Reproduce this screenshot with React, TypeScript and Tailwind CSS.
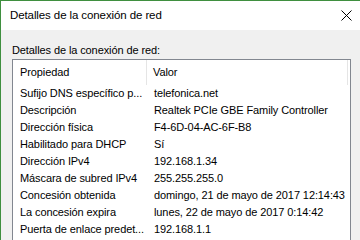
import React from 'react';

const rows: [string, string][] = [
  ['Sufijo DNS específico p...', 'telefonica.net'],
  ['Descripción', 'Realtek PCIe GBE Family Controller'],
  ['Dirección física', 'F4-6D-04-AC-6F-B8'],
  ['Habilitado para DHCP', 'Sí'],
  ['Dirección IPv4', '192.168.1.34'],
  ['Máscara de subred IPv4', '255.255.255.0'],
  ['Concesión obtenida', 'domingo, 21 de mayo de 2017 12:14:43'],
  ['La concesión expira', 'lunes, 22 de mayo de 2017 0:14:42'],
  ['Puerta de enlace predet...', '192.168.1.1'],
];

const App: React.FC = () => {
  return (
    <div
      className="w-[360px] h-[240px] overflow-hidden flex flex-col bg-white border-l border-t border-[#3f8f3f] text-black text-[11px] tracking-[-0.1px]"
      style={{ fontFamily: '"Liberation Sans", Arial, sans-serif' }}
    >
      {/* Title bar */}
      <div className="h-[29px] shrink-0 flex items-center justify-between pl-[9px] pr-[8px]">
        <span className="text-[11.5px] leading-none">Detalles de la conexión de red</span>
        <svg width="11" height="11" viewBox="0 0 11 11">
          <path d="M0.5 0.5 L10.5 10.5 M10.5 0.5 L0.5 10.5" stroke="#000" strokeWidth="1" fill="none" />
        </svg>
      </div>

      {/* Body */}
      <div className="flex-1 bg-[#f0f0f0] pl-[11px] pt-[12px]">
        <div className="h-[17px] leading-[16px]">Detalles de la conexión de red:</div>

        <div className="w-[339px] h-[200px] border border-[#828790] bg-white">
          {/* Header */}
          <div className="h-[25px] flex items-center">
            <div className="w-[134px] h-full flex items-center pl-[7px] border-r border-[#e5e5e5]">Propiedad</div>
            <div className="w-[201px] h-full flex items-center pl-[6px] border-r border-[#e5e5e5]">Valor</div>
          </div>

          {rows.map(([k, v]) => (
            <div key={k} className="h-[17px] flex items-center whitespace-nowrap">
              <div className="w-[135px] pl-[7px]">{k}</div>
              <div className="pl-[6px]">{v}</div>
            </div>
          ))}
        </div>
      </div>
    </div>
  );
};

export default App;
